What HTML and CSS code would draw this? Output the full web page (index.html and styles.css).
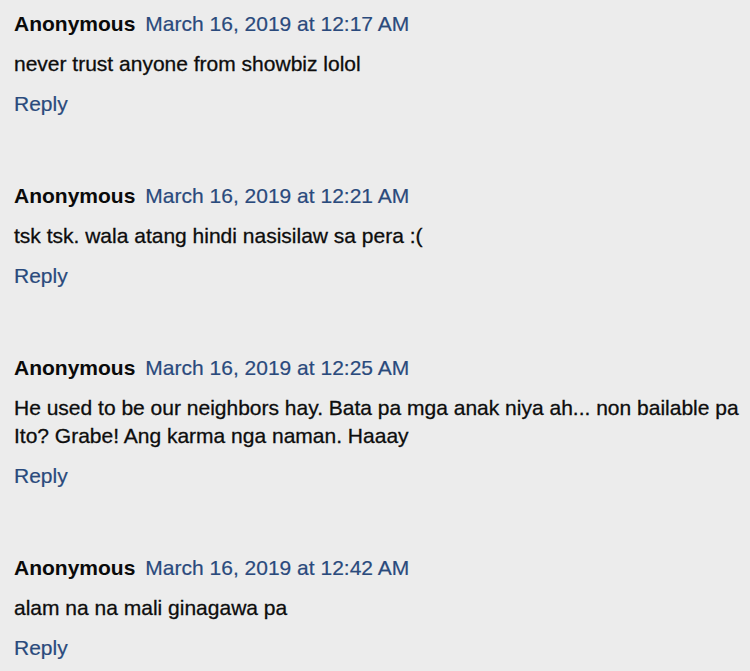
FILE: index.html
```html
<!DOCTYPE html>
<html>
<head>
<meta charset="utf-8">
<link rel="stylesheet" href="styles.css">
</head>
<body>
<div class="comments">
  <div class="comment">
    <div class="head"><span class="author">Anonymous</span><a class="date" href="#">March 16, 2019 at 12:17 AM</a></div>
    <p class="body">never trust anyone from showbiz lolol</p>
    <a class="reply" href="#">Reply</a>
  </div>
  <div class="comment">
    <div class="head"><span class="author">Anonymous</span><a class="date" href="#">March 16, 2019 at 12:21 AM</a></div>
    <p class="body">tsk tsk. wala atang hindi nasisilaw sa pera :(</p>
    <a class="reply" href="#">Reply</a>
  </div>
  <div class="comment">
    <div class="head"><span class="author">Anonymous</span><a class="date" href="#">March 16, 2019 at 12:25 AM</a></div>
    <p class="body">He used to be our neighbors hay. Bata pa mga anak niya ah... non bailable pa Ito? Grabe! Ang karma nga naman. Haaay</p>
    <a class="reply" href="#">Reply</a>
  </div>
  <div class="comment">
    <div class="head"><span class="author">Anonymous</span><a class="date" href="#">March 16, 2019 at 12:42 AM</a></div>
    <p class="body">alam na na mali ginagawa pa</p>
    <a class="reply" href="#">Reply</a>
  </div>
</div>
</body>
</html>
```
FILE: styles.css
```css
html, body {
  margin: 0;
  background: #ececec;
}
body {
  font-family: "Liberation Sans", Arial, sans-serif;
  font-size: 21px;
  line-height: 28px;
  color: #111;
}
.comments {
  padding: 10px 8px 0 14px;
  display: flex;
  flex-direction: column;
  gap: 64px;
}
.comment {
  display: flex;
  flex-direction: column;
  align-items: flex-start;
  gap: 12px;
}
.head {
  display: flex;
  gap: 10px;
  white-space: nowrap;
}
.author {
  font-weight: bold;
  color: #0a0a0a;
}
.date, .reply {
  color: #2a4a7c;
  text-decoration: none;
  -webkit-text-stroke: 0.2px #2a4a7c;
}
.body {
  margin: 0;
  color: #0d0d0d;
  -webkit-text-stroke: 0.3px #0d0d0d;
}
```
